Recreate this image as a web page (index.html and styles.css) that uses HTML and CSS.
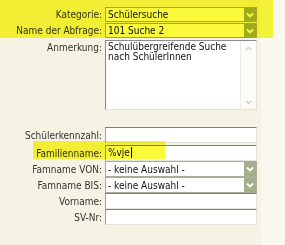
FILE: index.html
```
<!DOCTYPE html>
<html lang="de">
<head>
    <meta charset="UTF-8">
    <title>Schülersuche</title>
    <link rel="stylesheet" href="styles.css">
</head>
<body>
    <div class="form">
        <div class="row sel-row">
            <label>Kategorie:</label>
            <div class="select"><span class="val">Schülersuche</span><span class="btn"><svg width="8" height="6" viewBox="0 0 8 6"><path d="M1 1.5 L4 4.5 L7 1.5" fill="none" stroke="#fff" stroke-width="1.8"/></svg></span></div>
        </div>
        <div class="row sel-row">
            <label>Name der Abfrage:</label>
            <div class="select"><span class="val">101 Suche 2</span><span class="btn"><svg width="8" height="6" viewBox="0 0 8 6"><path d="M1 1.5 L4 4.5 L7 1.5" fill="none" stroke="#fff" stroke-width="1.8"/></svg></span></div>
        </div>
        <div class="row memo-row">
            <label>Anmerkung:</label>
            <div class="memo">
                <div class="memo-text">Schulübergreifende Suche nach SchülerInnen</div>
                <div class="memo-bar">
                    <span class="arr"><svg width="7" height="5" viewBox="0 0 7 5"><path d="M1 4 L3.5 1.5 L6 4" fill="none" stroke="#cfd2c4" stroke-width="1.4"/></svg></span>
                    <span class="arr"><svg width="7" height="5" viewBox="0 0 7 5"><path d="M1 1 L3.5 3.5 L6 1" fill="none" stroke="#cfd2c4" stroke-width="1.4"/></svg></span>
                </div>
            </div>
        </div>

        <div class="lower">
            <div class="row in-row">
                <label>Schülerkennzahl:</label>
                <div class="field"></div>
            </div>
            <div class="row in-row fam-row">
                <label>Familienname:</label>
                <div class="field">%vje<span class="caret"></span></div>
            </div>
            <div class="row in-row">
                <label>Famname VON:</label>
                <div class="select"><span class="val">- keine Auswahl -</span><span class="btn"><svg width="8" height="6" viewBox="0 0 8 6"><path d="M1 1.5 L4 4.5 L7 1.5" fill="none" stroke="#fff" stroke-width="1.8"/></svg></span></div>
            </div>
            <div class="row in-row">
                <label>Famname BIS:</label>
                <div class="select"><span class="val">- keine Auswahl -</span><span class="btn"><svg width="8" height="6" viewBox="0 0 8 6"><path d="M1 1.5 L4 4.5 L7 1.5" fill="none" stroke="#fff" stroke-width="1.8"/></svg></span></div>
            </div>
            <div class="row in-row">
                <label>Vorname:</label>
                <div class="field"></div>
            </div>
            <div class="row in-row">
                <label>SV-Nr:</label>
                <div class="field"></div>
            </div>
        </div>
    </div>

    <!-- gelbe Markierungen -->
    <div class="hl hl-top"></div>
    <div class="hl hl-fam"></div>
</body>
</html>
```

FILE: styles.css
```
body {
    margin: 0;
    background-color: #f9f7ee;
    font-family: "DejaVu Sans Condensed", "DejaVu Sans", sans-serif;
    font-size: 10px;
    color: #333;
}

.form {
    width: 261px;
    height: 245px;
    box-sizing: border-box;
    padding-top: 7px;
    background-color: #f6f3e4;
}

.row {
    display: grid;
    grid-template-columns: 102px 152px;
    column-gap: 3px;
    align-items: center;
}

.row label {
    text-align: right;
    white-space: nowrap;
}

.sel-row {
    height: 15px;
    margin-bottom: 1px;
}

.select {
    height: 15px;
    box-sizing: border-box;
    display: flex;
    align-items: center;
    padding-left: 2px;
    border: 1px solid #a9ae98;
    background: #fff;
    color: #111;
}

.select .val {
    flex: 1;
    white-space: nowrap;
}

.btn {
    width: 12px;
    height: 13px;
    display: flex;
    align-items: center;
    justify-content: center;
    background: #a3ae8b;
}

/* Anmerkung */
.memo-row {
    align-items: start;
    margin-top: 2px;
}

.memo-row label {
    padding-top: 2px;
}

.memo {
    height: 70px;
    box-sizing: border-box;
    display: flex;
    border: 1px solid;
    border-color: #8c8c8c #e2e2da #e2e2da #8c8c8c;
    background: #fff;
}

.memo-text {
    flex: 1;
    padding: 1px 2px;
    line-height: 10px;
    color: #111;
}

.memo-bar {
    width: 15px;
    display: flex;
    flex-direction: column;
    justify-content: space-between;
    background: #fbfbf7;
    border-left: 1px solid #eeeee6;
}

.arr {
    height: 14px;
    display: flex;
    align-items: center;
    justify-content: center;
}

/* untere Felder */
.lower {
    margin-top: 17px;
}

.in-row {
    height: 16px;
}

.fam-row {
    margin-top: 2px;
}

.in-row .select {
    height: 16px;
}

.in-row .btn {
    height: 14px;
}

.field {
    height: 16px;
    box-sizing: border-box;
    padding-left: 2px;
    border: 1px solid;
    border-color: #7e7e7e #e4e4dc #e4e4dc #a0a0a0;
    background: #fff;
    color: #111;
    line-height: 14px;
}

.caret {
    display: inline-block;
    width: 1px;
    height: 11px;
    margin-left: 1px;
    vertical-align: -2px;
    background: #000;
}

/* Markierungen */
.hl {
    position: absolute;
    background: #fafa3a;
    mix-blend-mode: multiply;
}

.hl-top {
    left: 0;
    top: 0;
    width: 273px;
    height: 38px;
}

.hl-fam {
    left: 33px;
    top: 141px;
    width: 132px;
    height: 18px;
}
```
